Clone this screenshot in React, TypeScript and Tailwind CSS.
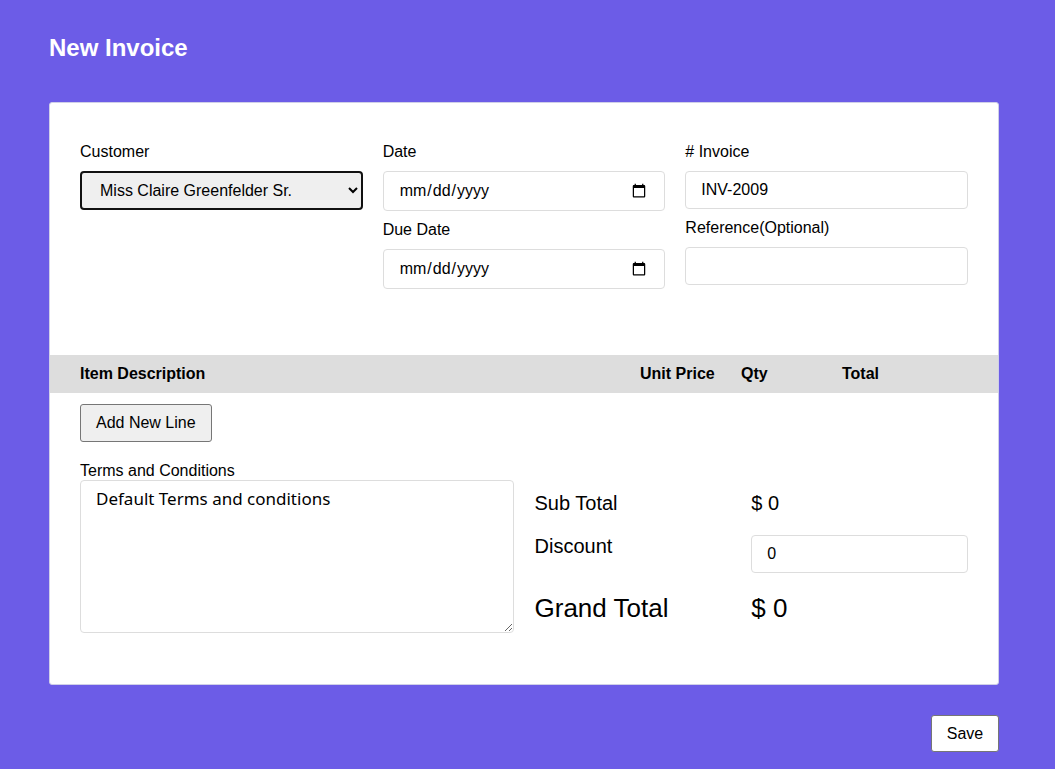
function Field({ label, children }: { label: string; children: React.ReactNode }) {
    return (
        <div className="flex flex-col">
            <label className="text-base leading-[18px] mt-[1px] mb-[10px]">{label}</label>
            {children}
        </div>
    );
}

export default function App() {
    return (
        <div className="min-h-[769px] bg-[#6c5ce7] pl-[49px] pr-[56px] pb-[18px] font-['Liberation_Sans',Arial,sans-serif] text-black">
            <h1 className="pt-[34px] mb-[40px] text-[24px] leading-[28px] font-bold text-white">New Invoice</h1>

            <div className="bg-white border border-[#cfcfe8] rounded-[3px] pt-[39px] pb-[51px]">
                <div className="px-[30px] grid grid-cols-3 gap-x-[20px] pb-[66px]">
                    <Field label="Customer">
                        <select className="h-[39px] border-2 border-[#111] rounded-[4px] bg-[#efefef] pl-[14px] pr-[2px] text-base">
                            <option>Miss Claire Greenfelder Sr.</option>
                        </select>
                    </Field>
                    <div className="flex flex-col">
                        <Field label="Date">
                            <input type="date" className="h-[40px] border border-[#ddd] rounded-[4px] px-[15px] text-base" />
                        </Field>
                        <div className="mt-[9px]">
                            <Field label="Due Date">
                                <input type="date" className="h-[40px] w-full border border-[#ddd] rounded-[4px] px-[15px] text-base" />
                            </Field>
                        </div>
                    </div>
                    <div className="flex flex-col">
                        <Field label="# Invoice">
                            <input defaultValue="INV-2009" className="h-[38px] border border-[#ddd] rounded-[4px] px-[15px] text-base" />
                        </Field>
                        <div className="mt-[9px]">
                            <Field label="Reference(Optional)">
                                <input className="h-[38px] w-full border border-[#ddd] rounded-[4px] px-[15px] text-base" />
                            </Field>
                        </div>
                    </div>
                </div>

                <div className="bg-[#dddddd] h-[38px] px-[30px] grid grid-cols-[560px_101px_101px_1fr] items-center font-bold text-base">
                    <span>Item Description</span>
                    <span>Unit Price</span>
                    <span>Qty</span>
                    <span>Total</span>
                </div>

                <div className="px-[30px]">
                    <button className="mt-[11px] h-[38px] px-[15px] bg-[#efefef] border border-[#767676] rounded-[3px] text-base">
                        Add New Line
                    </button>

                    <div className="mt-[19px] grid grid-cols-2 gap-x-[21px]">
                        <div className="flex flex-col">
                            <label className="text-base leading-[19px]">Terms and Conditions</label>
                            <textarea
                                defaultValue="Default Terms and conditions"
                                className="h-[153px] border border-[#ddd] rounded-[4px] px-[15px] py-[6px] text-[17px] leading-[24px] font-['Noto_Sans',sans-serif]"
                            />
                        </div>
                        <div className="pt-[19px]">
                            <div className="grid grid-cols-2 mt-[8px] h-[28px] items-center text-[20px]">
                                <span>Sub Total</span>
                                <span>$ 0</span>
                            </div>
                            <div className="grid grid-cols-2 mt-[19px] items-start">
                                <span className="text-[20px] leading-[22px]">Discount</span>
                                <input defaultValue="0" className="h-[38px] border border-[#ddd] rounded-[4px] px-[15px] text-base" />
                            </div>
                            <div className="grid grid-cols-2 mt-[16px] h-[30px] items-center text-[26px]">
                                <span>Grand Total</span>
                                <span>$ 0</span>
                            </div>
                        </div>
                    </div>
                </div>
            </div>

            <div className="flex justify-end mt-[30px]">
                <button className="h-[37px] w-[68px] bg-white border border-[#767676] rounded-[3px] text-base">Save</button>
            </div>
        </div>
    );
}
